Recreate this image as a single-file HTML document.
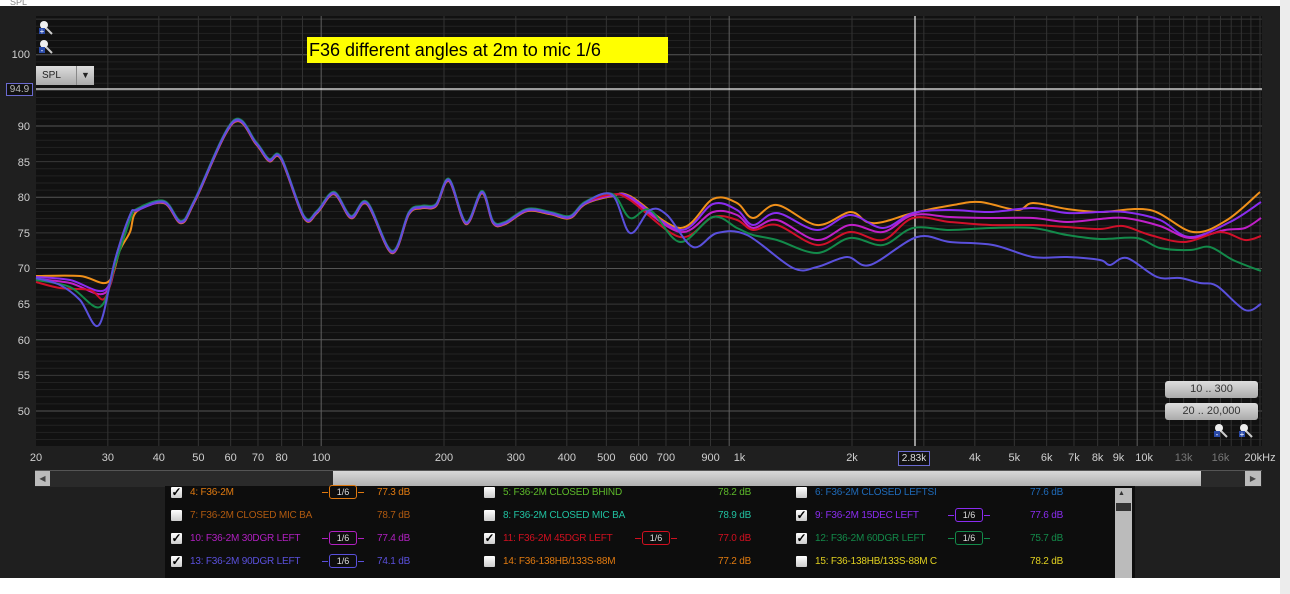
<!DOCTYPE html>
<html><head><meta charset="utf-8"><style>
body{margin:0;width:1290px;height:594px;background:#fff;overflow:hidden;font-family:"Liberation Sans",sans-serif;position:relative}
#app{position:absolute;left:0;top:6px;width:1280px;height:572px;background:#1f1f1f}
#rs{position:absolute;left:1280px;top:0;width:10px;height:594px;background:#ececec}
.t{position:absolute;font-size:11px;color:#cfcfcf;white-space:nowrap}
.lg{position:absolute;font-size:10px;white-space:nowrap;letter-spacing:-0.2px}
.cb{position:absolute;width:11px;height:11px;background:linear-gradient(#fff,#ccc);border-radius:1px;color:#000;font-size:12px;line-height:11px;text-align:center;font-weight:bold}
.bd{position:absolute;height:12px;width:26px;border:1.5px solid;border-radius:3px;font-size:9px;line-height:12px;text-align:center;color:#ddd}
.bd:before,.bd:after{content:"";position:absolute;top:6px;width:6px;border-top:1.5px solid;border-color:inherit}
.bd:before{left:-8px}.bd:after{right:-8px}
.btn{position:absolute;left:1165px;width:93px;height:17px;border-radius:3px;background:linear-gradient(#ddd,#aaa);color:#333;font-size:11px;line-height:17px;text-align:center}
</style></head><body>
<div id="app"></div><div id="rs"></div>
<div class="t" style="left:10px;top:-3px;font-size:9px;color:#888">SPL</div>
<svg id="g" width="1290" height="594" style="position:absolute;left:0;top:0"></svg>
<div style="position:absolute;left:307px;top:37px;width:361px;height:26px;background:#ffff00;color:#000;font-size:18px;line-height:26px;padding-left:2px;box-sizing:border-box">F36 different angles at 2m to mic 1/6</div>
<div style="position:absolute;left:36px;top:66px;width:58px;height:19px;background:linear-gradient(#ddd,#aaa);font-size:10px;line-height:19px;color:#222"><span style="padding-left:6px">SPL</span><span style="position:absolute;left:40px;top:0;width:17px;height:19px;border-left:1px solid #888;text-align:center;font-size:9px">▼</span></div>
<div style="position:absolute;left:6px;top:83px;width:25px;height:11px;border:1px solid #6a6ad0;background:#111;color:#bbb;font-size:10px;line-height:11px;text-align:center">94.9</div>
<div style="position:absolute;left:898px;top:451px;width:30px;height:13px;border:1px solid #6a6ad0;background:#111;color:#ddd;font-size:10px;line-height:13px;text-align:center">2.83k</div>
<div class="btn" style="top:381px">10 .. 300</div>
<div class="btn" style="top:403px">20 .. 20,000</div>
<div style="position:absolute;left:35px;top:470px;width:1227px;height:16px;background:#2a2a2a;border-top:1px solid #555"></div>
<div style="position:absolute;left:35px;top:471px;width:15px;height:15px;background:#bbb;color:#444;font-size:8px;line-height:15px;text-align:center">◀</div>
<div style="position:absolute;left:333px;top:471px;width:868px;height:15px;background:linear-gradient(#d8d8d8,#b0b0b0)"></div>
<div style="position:absolute;left:1245px;top:471px;width:16px;height:15px;background:#bbb;color:#444;font-size:8px;line-height:15px;text-align:center">▶</div>
<div style="position:absolute;left:165px;top:486px;width:970px;height:92px;background:#0d0d0d"></div>
<div style="position:absolute;left:1115px;top:488px;width:17px;height:90px;background:#bbb"></div>
<div style="position:absolute;left:1116px;top:503px;width:15px;height:8px;background:#333"></div>
<div style="position:absolute;left:1118px;top:490px;color:#333;font-size:7px">▲</div>
<div id="leg"></div>
<script>
const S='http://www.w3.org/2000/svg',g=document.getElementById('g');
function el(n,a){const e=document.createElementNS(S,n);for(const k in a)e.setAttribute(k,a[k]);g.appendChild(e);return e}
const X=f=>36+408*Math.log10(f/20),Y=d=>126+(90-d)*7.125;
el('rect',{x:36,y:16,width:1226,height:430,fill:'#111'});
for(let d=46;d<=105;d++){let c=d%10==0?'#555':d%5==0?'#383838':'#222';el('line',{x1:36,x2:1262,y1:Y(d),y2:Y(d),stroke:c,'stroke-width':1})}
let fr=[];for(let f=30;f<100;f+=10)fr.push(f);for(let f=100;f<1000;f+=100)fr.push(f);for(let f=1000;f<=20000;f+=1000)fr.push(f);
fr.forEach(f=>{let c=(f==100||f==1000||f==10000)?'#606060':'#333';el('line',{x1:X(f),x2:X(f),y1:16,y2:446,stroke:c})});
el('line',{x1:36,x2:1262,y1:89,y2:89,stroke:'#eee','stroke-width':1.2});
el('line',{x1:915,x2:915,y1:16,y2:446,stroke:'#eee','stroke-width':1.2});
const low=[[137,210],[164,202],[181,222],[195,200],[233,122],[256,143],[269,160],[281,158],[304,217],[317,212],[334,193],[351,217],[367,203],[392,252],[409,213],[422,207],[436,205],[449,180],[466,223],[482,192],[493,222],[505,223],[527,210],[550,213],[570,217],[585,203],[612,195]];
const C={
blue:['#5a50dc',[[36,278],[60,285],[80,300],[99,325],[115,260],[130,215]],[[630,233],[650,210],[667,215],[693,247],[717,233],[747,235],[793,268],[817,267],[847,257],[870,265],[917,237],[950,242],[993,245],[1033,257],[1067,257],[1100,260],[1110,265],[1127,258],[1157,277],[1180,278],[1200,283],[1217,286],[1245,310],[1261,304]]],
green:['#138a4a',[[36,280],[70,287],[100,307],[115,265],[130,220]],[[630,218],[650,210],[680,242],[713,217],[737,228],[753,235],[777,240],[817,253],[850,238],[883,245],[913,228],[950,230],[990,228],[1033,228],[1067,235],[1100,239],[1137,238],[1160,248],[1190,250],[1210,247],[1233,260],[1261,271]]],
red:['#d0102a',[[36,282],[60,288],[90,290],[105,298],[118,255],[130,218]],[[630,200],[680,237],[713,217],[737,220],[753,230],[777,225],[817,245],[850,232],[883,240],[913,218],[950,222],[990,225],[1033,225],[1067,227],[1100,229],[1123,226],[1150,235],[1185,242],[1220,232],[1245,240],[1261,236]]],
mag:['#c020c8',[[36,279],[70,283],[105,293],[118,252],[130,217]],[[630,199],[680,232],[713,212],[737,215],[753,228],[777,220],[817,240],[850,225],[883,232],[913,215],[950,217],[990,218],[1033,218],[1067,222],[1100,219],[1125,218],[1160,226],[1190,238],[1225,230],[1245,228],[1261,218]]],
purp:['#8a2cf0',[[36,277],[70,280],[105,290],[118,250],[130,217]],[[630,197],[680,230],[713,204],[737,210],[753,225],[777,213],[817,230],[850,215],[883,228],[913,213],[950,210],[990,212],[1033,208],[1067,213],[1100,212],[1125,212],[1160,220],[1190,237],[1230,222],[1261,202]]],
orng:['#f0901a',[[36,276],[80,276],[108,282],[120,250],[130,232]],[[630,196],[680,228],[713,199],[737,203],[753,218],[777,205],[817,225],[850,212],[867,222],[883,222],[913,213],[953,205],[980,202],[1017,210],[1033,203],[1067,209],[1100,212],[1150,210],[1193,232],[1227,220],[1260,192]]]};
function smooth(p){let d='M'+p[0][0]+','+p[0][1];for(let i=0;i<p.length-1;i++){const p0=p[i-1]||p[i],p1=p[i],p2=p[i+1],p3=p[i+2]||p2;
const c1=[p1[0]+(p2[0]-p0[0])/6,p1[1]+(p2[1]-p0[1])/6],c2=[p2[0]-(p3[0]-p1[0])/6,p2[1]-(p3[1]-p1[1])/6];d+=`C${c1[0].toFixed(1)},${c1[1].toFixed(1)} ${c2[0].toFixed(1)},${c2[1].toFixed(1)} ${p2[0]},${p2[1]}`}return d}
const offs={orng:1.2,purp:0.6,mag:0,red:-0.6,green:-1.2,blue:-0.3};
for(const k of ['orng','purp','mag','red','green','blue']){const [c,a,b]=C[k];const o=offs[k];const lw=low.map(p=>[p[0],p[1]+o]);
el('path',{d:smooth(a.concat(lw,b)),fill:'none',stroke:c,'stroke-width':2,'stroke-linejoin':'round'})}
function tx(x,y,s,o){const e=el('text',Object.assign({x:x,y:y,fill:'#cfcfcf','font-size':11,'font-family':'Liberation Sans'},o||{}));e.textContent=s}
[[100,54],[90,126],[85,162],[80,197],[75,233],[70,268],[65,304],[60,340],[55,375],[50,411]].forEach(([v,y])=>tx(30,y+4,v,{'text-anchor':'end'}));
[[20,'20'],[30,'30'],[40,'40'],[50,'50'],[60,'60'],[70,'70'],[80,'80'],[100,'100'],[200,'200'],[300,'300'],[400,'400'],[500,'500'],[600,'600'],[700,'700'],[900,'900'],[1060,'1k'],[2000,'2k'],[4000,'4k'],[5000,'5k'],[6000,'6k'],[7000,'7k'],[8000,'8k'],[9000,'9k'],[10400,'10k']].forEach(([f,s])=>tx(X(f),461,s,{'text-anchor':'middle'}));
tx(X(13000),461,'13k',{'text-anchor':'middle',fill:'#777'});tx(X(16000),461,'16k',{'text-anchor':'middle',fill:'#777'});tx(1260,461,'20kHz',{'text-anchor':'middle'});
function mag(x,y,plus){el('circle',{cx:x+4,cy:y+4,r:4,fill:'#eee'});el('line',{x1:x+6,y1:y+7,x2:x+12,y2:y+13,stroke:'#ccc','stroke-width':2});el('rect',{x:x-1,y:y+7,width:6,height:6,fill:'#2a4aa8'});el('text',{x:x+2,y:y+13,fill:'#fff','font-size':8,'text-anchor':'middle'}).textContent=plus?'+':'-'}
mag(40,21,1);mag(40,40,0);mag(1215,424,0);mag(1240,424,1);
const rows=[[493,'#e07a10','4: F36-2M','77.3 dB',1,1,'#5cb82a','5: F36-2M CLOSED BHIND','78.2 dB',0,0,'#1f6ab8','6: F36-2M CLOSED LEFTSI','77.6 dB',0,0],
[516,'#b05a10','7: F36-2M CLOSED MIC BA','78.7 dB',0,0,'#20c0a0','8: F36-2M CLOSED MIC BA','78.9 dB',0,0,'#8a2cf0','9: F36-2M 15DEC LEFT','77.6 dB',1,1],
[539,'#b020c0','10: F36-2M 30DGR LEFT','77.4 dB',1,1,'#d01020','11: F36-2M 45DGR LEFT','77.0 dB',1,1,'#138a4a','12: F36-2M 60DGR LEFT','75.7 dB',1,1],
[562,'#5a50dc','13: F36-2M 90DGR LEFT','74.1 dB',1,1,'#e07a10','14: F36-138HB/133S-88M','77.2 dB',0,0,'#e0d020','15: F36-138HB/133S-88M C','78.2 dB',0,0]];
let h='';const cols=[[171,190,329,377],[484,503,642,718],[796,815,955,1030]];
rows.forEach(r=>{const y=r[0];for(let i=0;i<3;i++){const [c,n,d,ck,b]=r.slice(1+i*5,6+i*5);const [cx,tx2,bx,dx]=cols[i];
h+=`<div class="cb" style="left:${cx}px;top:${y-6}px">${ck?'✓':''}</div><div class="lg" style="left:${tx2}px;top:${y-6}px;color:${c}">${n}</div><div class="lg" style="left:${dx}px;top:${y-6}px;color:${c}">${d}</div>`;
if(b)h+=`<div class="bd" style="left:${bx}px;top:${y-8}px;border-color:${c}">1/6</div>`}});
document.getElementById('leg').innerHTML=h;
</script>
</body></html>
